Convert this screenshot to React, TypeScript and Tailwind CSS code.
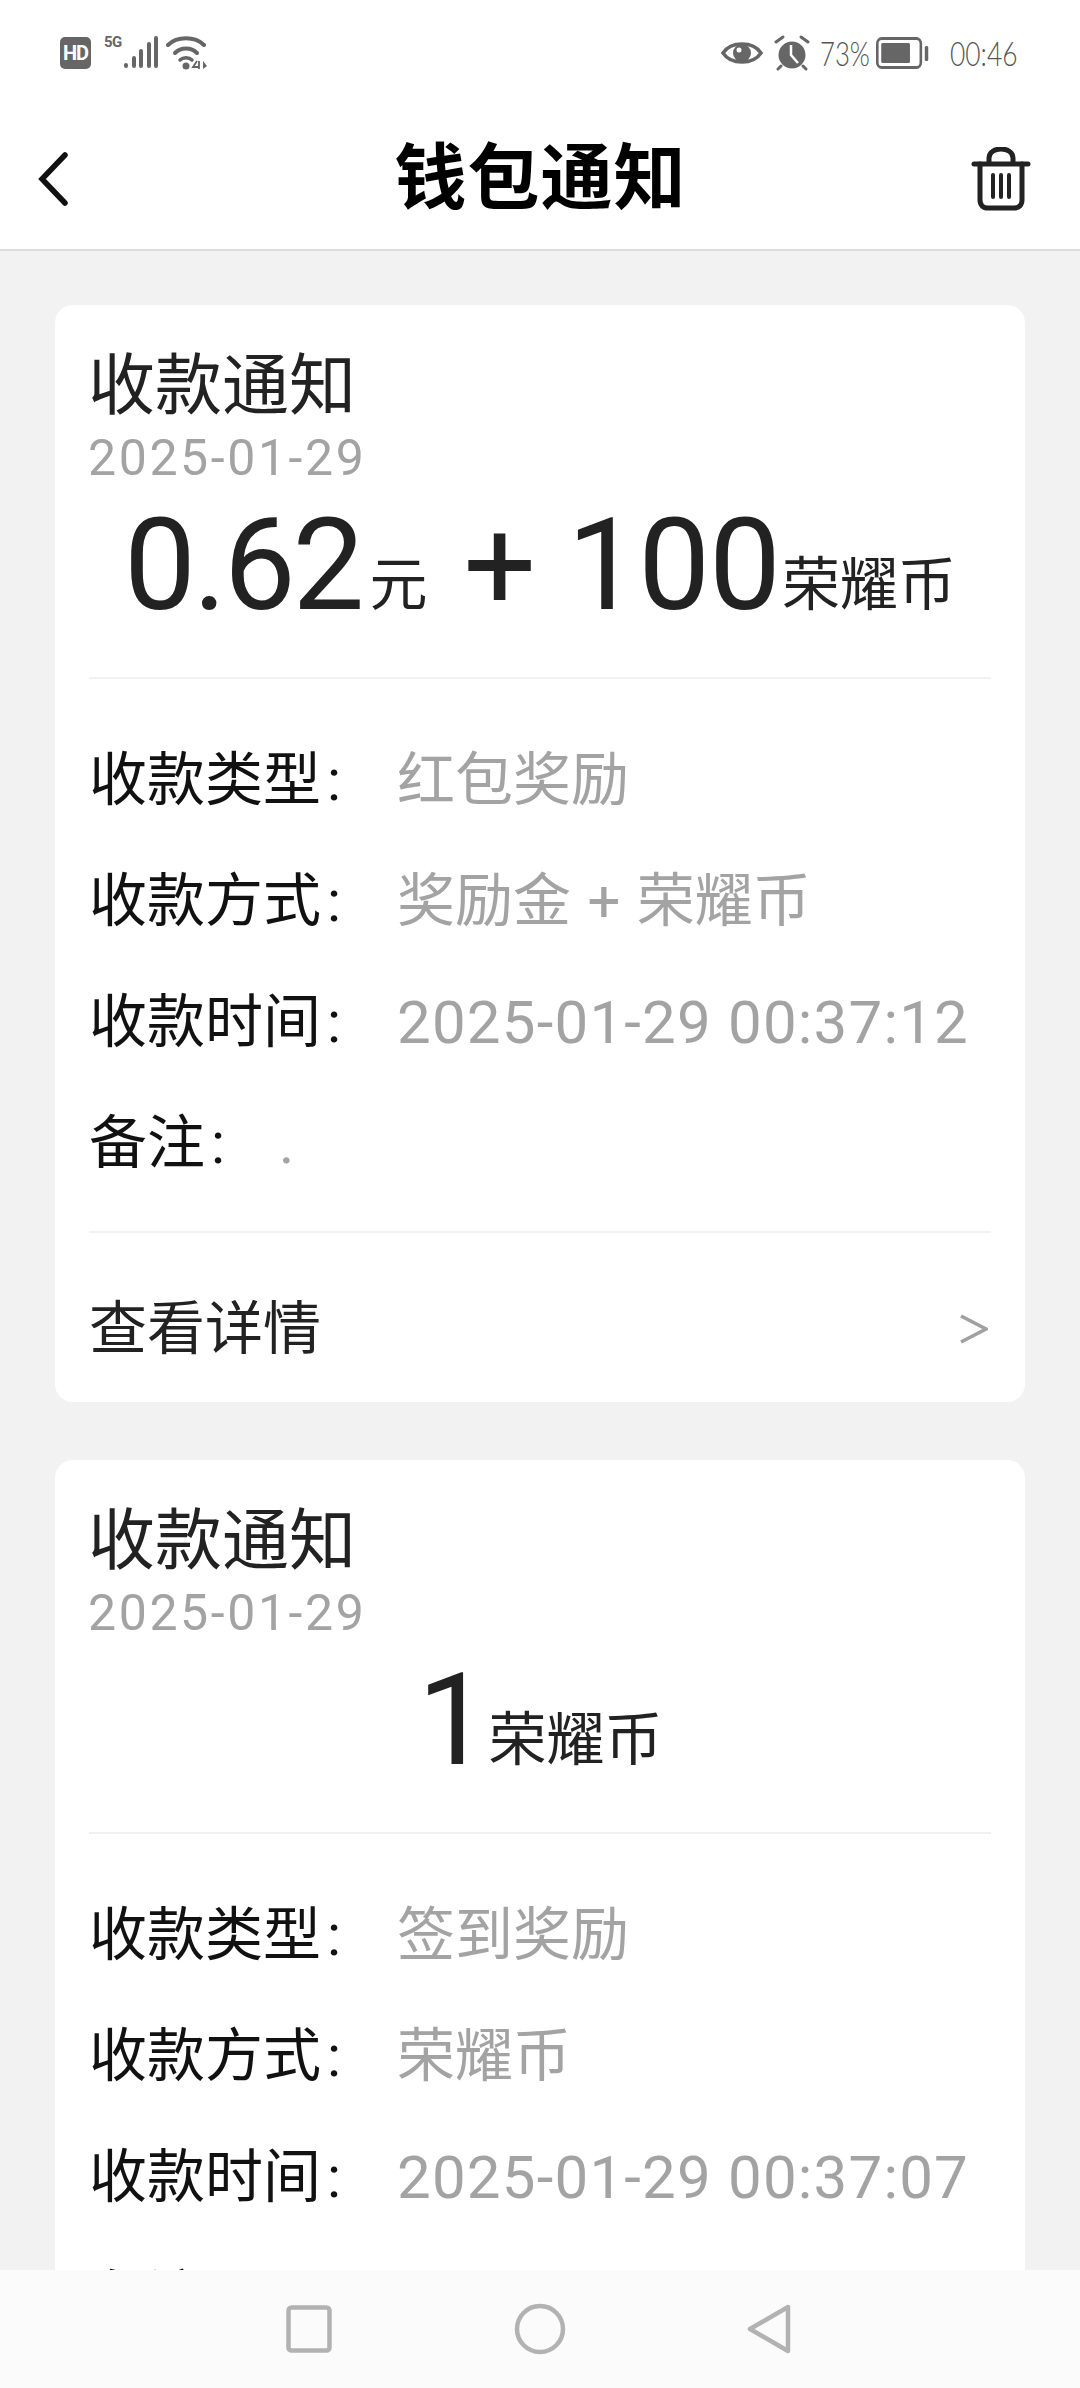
import React from "react";

const rows1 = [
  ["收款类型", "红包奖励"],
  ["收款方式", "奖励金 + 荣耀币"],
  ["收款时间", "2025-01-29 00:37:12"],
  ["备注", "."],
];
const rows2 = [
  ["收款类型", "签到奖励"],
  ["收款方式", "荣耀币"],
  ["收款时间", "2025-01-29 00:37:07"],
  ["备注", "."],
];

function Big({ children }: { children: React.ReactNode }) {
  return <span className="text-[128px] leading-none tracking-[-3px]">{children}</span>;
}

function Card({ amount, rows }: { amount: React.ReactNode; rows: string[][] }) {
  return (
    <div className="bg-white rounded-[18px] px-[34px] pt-[40px] shrink-0 h-[1097px] flex flex-col">
      <div className="h-[80px] pt-[3px] flex items-center text-[67px] text-[#222222] -ml-[1px]">收款通知</div>
      <div className="h-[66px] flex items-center text-[50px] text-[#a3a3a3] tracking-[2.6px] -ml-[1px]">2025-01-29</div>
      <div className="h-[148px] flex items-baseline justify-center text-[#222222] pt-[10px]">{amount}</div>
      <div className="h-[2px] bg-[#f1f1f1] mt-[39px]" />
      <div className="pt-[40px] pb-[28px] flex flex-col">
        {rows.map(([k, v]) => (
          <div key={k} className="h-[121px] pt-[2px] flex items-center text-[58px]">
            <span className={k === "备注" ? "text-[#111111] w-[190px] shrink-0" : "text-[#111111] w-[308px] shrink-0"}>
              {k}
              <span className="ml-[6px]">:</span>
            </span>
            <span className={/^\d/.test(v) ? "text-[#a3a3a3] whitespace-nowrap text-[60px] tracking-[1.2px]" : "text-[#a3a3a3] whitespace-nowrap [word-spacing:2px]"}>{v}</span>
          </div>
        ))}
      </div>
      <div className="h-[2px] bg-[#f1f1f1]" />
      <div className="pt-[23px] h-[170px] flex items-center justify-between text-[58px] text-[#222222]">
        <span>查看详情</span>
        <svg width="28" height="30" viewBox="0 0 28 30" className="mr-[3px]">
          <path d="M1 2 L26 15 L1 28" fill="none" stroke="#a0a0a0" strokeWidth="3.5" />
        </svg>
      </div>
    </div>
  );
}

export default function App() {
  return (
    <div className="relative w-[1080px] h-[2388px] overflow-hidden bg-[#f2f2f2] font-['Roboto','Noto_Sans_CJK_SC',sans-serif]">
      <div className="bg-white h-[251px] border-b-2 border-[#dddddd]">
        <div className="h-[110px] flex items-center justify-between pl-[60px] pr-[62px] pb-[4px] text-[#666666]">
          <div className="flex items-center">
            <div className="w-[31px] h-[32px] rounded-[5px] bg-[#666666] text-white text-[20px] font-bold flex items-center justify-center leading-none tracking-[-1px]">HD</div>
            <span className="text-[15px] font-bold self-start mt-[-1px] ml-[13px] leading-none tracking-[-0.5px]">5G</span>
            <svg width="36" height="34" viewBox="0 0 36 34" className="ml-[1px]">
              <g stroke="#666666" strokeWidth="4" strokeLinecap="round">
                <path d="M3 30V29M11 30V22M18 30V15M26 30V8M33 30V2" />
              </g>
            </svg>
            <svg width="42" height="34" viewBox="0 0 42 34" className="ml-[7px]">
              <g fill="none" stroke="#666666" strokeWidth="4" strokeLinecap="round">
                <path d="M2 9C11 0 29 0 38 9" />
                <path d="M9 17C15 11 25 11 31 17" />
                <path d="M14 24C17 21 23 21 26 24" strokeWidth="3.5" />
              </g>
              <circle cx="20" cy="30" r="3.5" fill="#666666" />
              <path d="M31 25L27 31H33M33 25V33" stroke="#666666" strokeWidth="1.8" fill="none" />
              <path d="M37 25L41 30L37 33Z" fill="#666666" />
            </svg>
          </div>
          <div className="flex items-center">
            <svg width="42" height="28" viewBox="0 0 42 28">
              <path d="M2 14C10 2 32 2 40 14C32 26 10 26 2 14Z" fill="none" stroke="#666666" strokeWidth="3.5" />
              <circle cx="21" cy="14" r="9" fill="#666666" />
              <circle cx="18" cy="11" r="2.5" fill="#ffffff" />
            </svg>
            <svg width="36" height="36" viewBox="0 0 36 36" className="ml-[11px]">
              <circle cx="18" cy="20" r="13.5" fill="#666666" />
              <path d="M17 10L17 20L24 28" stroke="#ffffff" strokeWidth="2.5" fill="none" />
              <path d="M2 7L9 2M34 7L27 2M7 31L4 34M29 31L32 34" stroke="#666666" strokeWidth="3" strokeLinecap="round" />
            </svg>
            <span className="ml-[10px] w-[48px] whitespace-nowrap origin-left scale-x-[0.78] text-[33px] font-['Lato',sans-serif] font-light leading-none text-[#555555]">73%</span>
            <svg width="54" height="32" viewBox="0 0 62 32" preserveAspectRatio="none" className="ml-[8px]">
              <rect x="1.5" y="1.5" width="50" height="29" rx="5" fill="none" stroke="#666666" strokeWidth="3" />
              <rect x="6" y="6" width="33" height="20" rx="1.5" fill="#666666" />
              <rect x="56" y="9" width="4" height="15" rx="1.5" fill="#666666" />
            </svg>
            <span className="ml-[20px] w-[68px] whitespace-nowrap origin-left scale-x-[0.8] text-[33px] font-['Lato',sans-serif] font-light leading-none text-[#555555]">00:46</span>
          </div>
        </div>
        <div className="h-[139px] flex items-center justify-between pl-[36px] pr-[49px] pb-[2px]">
          <div className="w-[74px]">
            <svg width="34" height="54" viewBox="0 0 34 54">
              <path d="M29 3L6 27L29 51" fill="none" stroke="#111111" strokeWidth="5.5" strokeLinecap="round" />
            </svg>
          </div>
          <div className="text-[72px] leading-none font-bold text-black tracking-[1px]">钱包通知</div>
          <svg width="60" height="64" viewBox="0 0 60 64">
            <g fill="none" stroke="#222222" strokeWidth="5" strokeLinecap="round">
              <path d="M3 17H57" />
              <path d="M18 16V11C18 -1 42 -1 42 11V16" />
              <path d="M9 17V53C9 58 12 61 17 61H43C48 61 51 58 51 53V17" />
              <path d="M22 28V50M30 28V50M38 28V50" strokeWidth="4" />
            </g>
          </svg>
        </div>
      </div>

      <div className="px-[55px] pt-[54px] flex flex-col gap-[58px]">
        <Card
          rows={rows1}
          amount={
            <>
              <Big>0.62</Big>
              <span className="text-[58px] leading-none ml-[8px] -translate-y-[4px]">元</span>
              <Big><span className="ml-[36px] mr-[34px]">+</span></Big>
              <span className="text-[128px] leading-none tracking-[-1px]">100</span>
              <span className="text-[58px] leading-none ml-[2px] -translate-y-[4px]">荣耀币</span>
            </>
          }
        />
        <Card
          rows={rows2}
          amount={
            <>
              <Big>1</Big>
              <span className="text-[58px] leading-none ml-[2px] -translate-y-[4px]">荣耀币</span>
            </>
          }
        />
      </div>

      <div className="absolute left-0 right-0 bottom-0 h-[118px] bg-[#fbfbfb]">
        <svg width="46" height="48" viewBox="0 0 46 48" className="absolute left-[286px] top-[35px]">
          <rect x="2.5" y="2.5" width="41" height="43" rx="3" fill="none" stroke="#b2b2b2" strokeWidth="4.5" />
        </svg>
        <svg width="52" height="52" viewBox="0 0 52 52" className="absolute left-[514px] top-[33px]">
          <circle cx="26" cy="26" r="23" fill="none" stroke="#b2b2b2" strokeWidth="4.5" />
        </svg>
        <svg width="46" height="52" viewBox="0 0 46 52" className="absolute left-[746px] top-[33px]">
          <path d="M42 4V48L4 26Z" fill="none" stroke="#b2b2b2" strokeWidth="4.5" strokeLinejoin="round" />
        </svg>
      </div>
    </div>
  );
}
